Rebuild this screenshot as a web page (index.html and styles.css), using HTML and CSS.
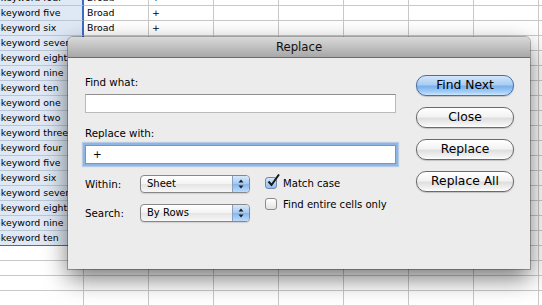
FILE: index.html
```html
<!DOCTYPE html>
<html lang="en">
<head>
    <meta charset="UTF-8">
    <title>Replace</title>
    <link rel="stylesheet" href="styles.css">
</head>
<body>
    <div class="sheet">
        <div class="row"><div class="c key sel">+keyword four</div><div class="c">Broad</div><div class="c">+</div><div class="rest"></div></div>
        <div class="row"><div class="c key sel">+keyword five</div><div class="c">Broad</div><div class="c">+</div><div class="rest"></div></div>
        <div class="row"><div class="c key sel">+keyword six</div><div class="c">Broad</div><div class="c">+</div><div class="rest"></div></div>
        <div class="row"><div class="c key sel">+keyword seven</div><div class="c"></div><div class="c"></div><div class="rest"></div></div>
        <div class="row"><div class="c key sel">+keyword eight</div><div class="c"></div><div class="c"></div><div class="rest"></div></div>
        <div class="row"><div class="c key sel">+keyword nine</div><div class="c"></div><div class="c"></div><div class="rest"></div></div>
        <div class="row"><div class="c key sel">+keyword ten</div><div class="c"></div><div class="c"></div><div class="rest"></div></div>
        <div class="row"><div class="c key sel">+keyword one</div><div class="c"></div><div class="c"></div><div class="rest"></div></div>
        <div class="row"><div class="c key sel">+keyword two</div><div class="c"></div><div class="c"></div><div class="rest"></div></div>
        <div class="row"><div class="c key sel">+keyword three</div><div class="c"></div><div class="c"></div><div class="rest"></div></div>
        <div class="row"><div class="c key sel">+keyword four</div><div class="c"></div><div class="c"></div><div class="rest"></div></div>
        <div class="row"><div class="c key sel">+keyword five</div><div class="c"></div><div class="c"></div><div class="rest"></div></div>
        <div class="row"><div class="c key sel">+keyword six</div><div class="c"></div><div class="c"></div><div class="rest"></div></div>
        <div class="row"><div class="c key sel">+keyword seven</div><div class="c"></div><div class="c"></div><div class="rest"></div></div>
        <div class="row"><div class="c key sel">+keyword eight</div><div class="c"></div><div class="c"></div><div class="rest"></div></div>
        <div class="row"><div class="c key sel">+keyword nine</div><div class="c"></div><div class="c"></div><div class="rest"></div></div>
        <div class="row"><div class="c key sel last">+keyword ten</div><div class="c"></div><div class="c"></div><div class="rest"></div></div>
        <div class="row"><div class="c key"></div><div class="c"></div><div class="c"></div><div class="rest"></div></div>
        <div class="row"><div class="c key"></div><div class="c"></div><div class="c"></div><div class="rest"></div></div>
        <div class="row"><div class="c key"></div><div class="c"></div><div class="c"></div><div class="rest"></div></div>
        <div class="row"><div class="c key"></div><div class="c"></div><div class="c"></div><div class="rest"></div></div>
    </div>

    <div class="dialog">
        <div class="title">Replace</div>
        <div class="dialog-body">
            <div class="form">
                <div class="label">Find what:</div>
                <div class="field"></div>
                <div class="label second">Replace with:</div>
                <div class="field focus">+</div>
                <div class="options">
                    <div class="selects">
                        <span class="opt-label">Within:</span>
                        <div class="popup">
                            <span class="value">Sheet</span>
                            <span class="arrows"><svg width="16" height="16" viewBox="0 0 16 16"><path d="M5.5 6.5 L8 3.5 L10.5 6.5Z M5.5 9.5 L8 12.5 L10.5 9.5Z" fill="#1c1c1c"/></svg></span>
                        </div>
                        <span class="opt-label">Search:</span>
                        <div class="popup">
                            <span class="value">By Rows</span>
                            <span class="arrows"><svg width="16" height="16" viewBox="0 0 16 16"><path d="M5.5 6.5 L8 3.5 L10.5 6.5Z M5.5 9.5 L8 12.5 L10.5 9.5Z" fill="#1c1c1c"/></svg></span>
                        </div>
                    </div>
                    <div class="checks">
                        <div class="check">
                            <span class="box checked"><svg class="tick" width="16" height="16" viewBox="0 0 16 16"><path d="M2.5 7.5 L5.5 11 L13 0.5" fill="none" stroke="#1a1a1a" stroke-width="2"/></svg></span>
                            Match case
                        </div>
                        <div class="check">
                            <span class="box"></span>
                            Find entire cells only
                        </div>
                    </div>
                </div>
            </div>
            <div class="buttons">
                <button class="btn default">Find Next</button>
                <button class="btn">Close</button>
                <button class="btn">Replace</button>
                <button class="btn">Replace All</button>
            </div>
        </div>
    </div>
</body>
</html>
```

FILE: styles.css
```css
body {
    margin: 0;
    width: 542px;
    height: 305px;
    overflow: hidden;
    background: #fff;
    font-family: "DejaVu Sans", sans-serif;
    color: #000;
}

/* spreadsheet behind the dialog */
.sheet {
    margin: -9px 0 0 -12px;
    font-size: 9.4px;
}
.row {
    display: flex;
    height: 15px;
}
.c {
    flex: none;
    box-sizing: border-box;
    width: 65px;
    height: 15px;
    padding-left: 3px;
    border-right: 1px solid #c8c8c8;
    border-bottom: 1px solid #c8c8c8;
    line-height: 14px;
    white-space: nowrap;
    overflow: hidden;
}
.key {
    width: 96px;
    padding-left: 5px;
}
.sel {
    background: #dfe8f5;
    border-right: 2px solid #3b6dc6;
    border-bottom-color: #bcc7d6;
}
.sel.last {
    border-bottom-color: #3b6dc6;
}
.rest {
    flex: 1;
    box-sizing: border-box;
    height: 15px;
    border-bottom: 1px solid #c8c8c8;
    background: repeating-linear-gradient(to right, transparent 0 64px, #c8c8c8 64px 65px);
}

/* replace dialog */
.dialog {
    position: absolute;
    left: 68px;
    top: 37px;
    width: 462px;
    height: 232px;
    background: #ececec;
    border-radius: 5px 5px 0 0;
    box-shadow: 0 0 0 1px rgba(0, 0, 0, .28), 0 9px 24px rgba(0, 0, 0, .55);
}
.title {
    height: 20px;
    border-bottom: 1px solid #6c6c6c;
    border-radius: 5px 5px 0 0;
    background: linear-gradient(#d9d9d9, #a7a7a7);
    text-align: center;
    line-height: 21px;
    font-size: 11.7px;
    color: #111;
}
.dialog-body {
    display: flex;
    padding: 17px 16px 0 17px;
}
.form {
    width: 311px;
}
.label {
    font-size: 10.3px;
    line-height: 14px;
}
.label.second {
    margin-top: 13px;
}
.field {
    box-sizing: border-box;
    height: 19px;
    margin-top: 5px;
    padding-left: 7px;
    background: #fff;
    border: 1px solid #bababa;
    border-top-color: #8f8f8f;
    font-size: 10.3px;
    line-height: 17px;
}
.field.focus {
    border-color: #6f97cc;
    box-shadow: 0 0 0 2px #8db6e6, 0 0 1px 3px rgba(120, 165, 220, .45);
}

.options {
    display: flex;
    margin-top: 11px;
}
.selects {
    display: grid;
    grid-template-columns: 55px 110px;
    row-gap: 11px;
    align-items: center;
}
.opt-label {
    font-size: 10.3px;
}
.popup {
    display: flex;
    box-sizing: border-box;
    height: 18px;
    border: 1px solid #888;
    border-radius: 4px;
    background: linear-gradient(#fff, #f3f3f3 50%, #e4e4e4 51%, #f7f7f7);
    box-shadow: 0 1px 1px rgba(0, 0, 0, .12);
}
.popup .value {
    flex: 1;
    padding-left: 6px;
    font-size: 10px;
    line-height: 16px;
}
.popup .arrows {
    width: 16px;
    border-left: 1px solid #8aa0c0;
    border-radius: 0 3px 3px 0;
    background: linear-gradient(#d8e9fb, #a3c8f1 50%, #86b6ec 51%, #bcdcfb);
}
.popup .arrows svg {
    display: block;
}

.checks {
    display: flex;
    flex-direction: column;
    gap: 7px;
    margin: 1px 0 0 15px;
}
.check {
    display: flex;
    align-items: center;
    gap: 6px;
    height: 14px;
    font-size: 10.1px;
}
.box {
    position: relative;
    box-sizing: border-box;
    width: 12px;
    height: 12px;
    border: 1px solid #8a8a8a;
    border-radius: 3px;
    background: linear-gradient(#fff, #e2e2e2);
}
.box.checked {
    border-color: #6f88ab;
    background: linear-gradient(#d6e6f8, #93bfee);
}
.tick {
    position: absolute;
    left: 0;
    top: -4px;
}

.buttons {
    display: flex;
    flex-direction: column;
    gap: 11px;
    width: 98px;
    margin-left: auto;
}
.btn {
    box-sizing: border-box;
    height: 21px;
    padding: 0;
    border: 1px solid #6a6a6a;
    border-radius: 10px;
    background: linear-gradient(#fff, #f3f3f3 45%, #dfdfdf 55%, #f3f3f3 88%, #fff);
    box-shadow: 0 1px 1px rgba(0, 0, 0, .18);
    font-family: "DejaVu Sans", sans-serif;
    font-size: 12.3px;
    line-height: 19px;
    color: #000;
}
.btn.default {
    border-color: #4a6ea6;
    background: linear-gradient(#d3e6fb, #a9cdf4 45%, #7cb1ec 55%, #a5cff8 85%, #cfe7fd);
}
```
